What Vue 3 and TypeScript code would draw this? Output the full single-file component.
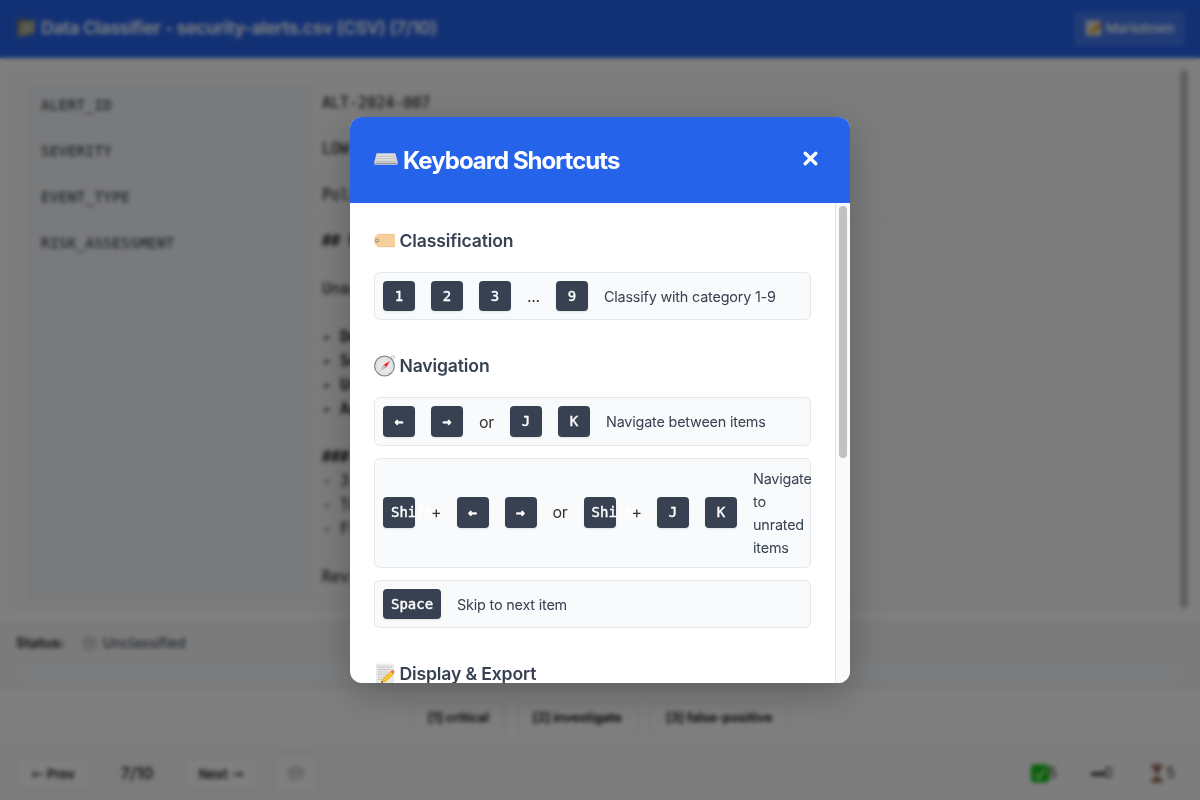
<script setup lang="ts">
interface Field { name: string; lines: { text: string; bold?: boolean }[] }
interface Part { kind: 'key' | 'sep' | 'arrow'; text: string }
interface Shortcut { parts: Part[]; label: string; tall?: boolean; multi?: boolean }

const key = (text: string): Part => ({ kind: 'key', text })
const arrow = (text: string): Part => ({ kind: 'arrow', text })
const sep = (text: string): Part => ({ kind: 'sep', text })

const fields: Field[] = [
  { name: 'ALERT_ID', lines: [{ text: 'ALT-2024-007' }] },
  { name: 'SEVERITY', lines: [{ text: 'LOW' }] },
  { name: 'EVENT_TYPE', lines: [{ text: 'Policy' }] },
  {
    name: 'RISK_ASSESSMENT',
    lines: [
      { text: '## Risk', bold: true }, { text: '' }, { text: 'Unauthorized' }, { text: '' },
      { text: '- De', bold: true }, { text: '- So', bold: true }, { text: '- Us', bold: true }, { text: '- Ac', bold: true },
      { text: '' }, { text: '### ', bold: true }, { text: '- 3' }, { text: '- Te' }, { text: '- Fi' }, { text: '' }, { text: 'Review' },
    ],
  },
]

const categories = ['[1] critical', '[2] investigate', '[3] false-positive']

const classification: Shortcut[] = [
  { parts: [key('1'), key('2'), key('3'), sep('...'), key('9')], label: 'Classify with category 1-9' },
]
const navigation: Shortcut[] = [
  { parts: [arrow('←'), arrow('→'), sep('or'), key('J'), key('K')], label: 'Navigate between items', tall: true },
  { parts: [key('Shift'), sep('+'), arrow('←'), arrow('→'), sep('or'), key('Shift'), sep('+'), key('J'), key('K')], label: 'Navigate to unrated items', tall: true, multi: true },
  { parts: [key('Space')], label: 'Skip to next item' },
]
const sections = [
  { icon: 'tag', title: 'Classification', items: classification },
  { icon: 'compass', title: 'Navigation', items: navigation },
  { icon: 'memo', title: 'Display & Export', items: [] as Shortcut[] },
]
</script>

<template>
  <div class="app">
    <div class="page">
      <header class="topbar">
        <svg class="folder" viewBox="0 0 20 20"><path d="M1 1h6l1 1h10l1 1v13L2 19H1z" fill="#7d7352" /><path d="M4 4l15-1-1 12L3 18z" fill="#b5b4a6" /></svg>
        <h1>Data Classifier - security-alerts.csv (CSV) (7/10)</h1>
        <button class="markdown">
          <svg viewBox="0 0 20 20"><path d="M1 1h18v18H1z" fill="#e4e2dc" /><path d="M5 17l1-4 9-8 4 3-9 8z" fill="#d9a520" /><path d="M15 5l2-2 3 3-1 2z" fill="#d76b72" /></svg>
          <span>Markdown</span>
        </button>
      </header>
      <main class="viewer">
        <div class="table">
          <div v-for="f in fields" :key="f.name" class="row">
            <div class="name">{{ f.name }}</div>
            <div class="value"><div v-for="(l, i) in f.lines" :key="i" class="line" :class="{ strong: l.bold }">{{ l.text }}</div></div>
          </div>
        </div>
        <div class="viewer-thumb"></div>
      </main>
      <section class="status">
        <div class="status-row"><b>Status:</b>
          <svg viewBox="0 0 16 16"><circle cx="8" cy="8" r="7.8" fill="#dcdddf" /><path d="M2 5h12" stroke="#c4c4c6" stroke-width="2" /></svg>
          <span>Unclassified</span>
        </div>
        <div class="note"></div>
      </section>
      <section class="cats"><button v-for="c in categories" :key="c">{{ c }}</button></section>
      <footer class="bottom">
        <button class="prev"><i>←</i> Prev</button>
        <span class="count">7/10</span>
        <button class="next">Next <i>→</i></button>
        <button class="talk"><svg viewBox="0 0 20 18"><path d="M10 1c5 0 9 3 9 7s-4 7-9 7l-5 2 0-3C2 13 1 11 1 8c0-4 4-7 9-7z" fill="#ececec" stroke="#999" /><path d="M5 8h10" stroke="#777" stroke-width="1.8" stroke-dasharray="2 2" /></svg></button>
        <div class="stats">
          <div class="stat done"><svg viewBox="0 0 18 18"><rect width="18" height="18" rx="3" fill="#0bc30b" /><path d="M4 9l4 5 6-10" fill="none" stroke="#fff" stroke-width="1.6" /></svg><span>5</span></div>
          <div class="stat skip"><svg viewBox="0 0 14 8"><path d="M0 4h14" stroke="#444" stroke-width="4" /></svg><span>0</span></div>
          <div class="stat wait"><svg viewBox="0 0 18 20"><path d="M3 2h12M3 18h12" stroke="#87513a" stroke-width="3" /><path d="M4 3h10c0 4-3 5-4 7 1 2 4 3 4 7H4c0-4 3-5 4-7-1-2-4-3-4-7z" fill="#cdbdb0" /><path d="M5 4h8l-4 6z" fill="#71402c" /><path d="M5 17l4-3 4 3z" fill="#71402c" /></svg><span>5</span></div>
        </div>
      </footer>
    </div>

    <div class="overlay">
      <div class="modal">
        <div class="modal-head">
          <svg class="keyboard" viewBox="0 0 24 12">
            <path d="M2.6 .3h18.8L24 10.3q0 1.4-1.2 1.4H1.2Q0 11.7 0 10.3z" fill="#d6d6d8" />
            <path d="M.3 10.4h23.4" stroke="#9c9ca0" stroke-width="1.2" />
            <path d="M3.5 2.2h17M3 4.5h18M2.5 6.8h19" stroke="#ececec" stroke-width="1.3" stroke-dasharray="1.3 .5" />
            <path d="M3.2 3.3h17.6M2.7 5.6h18.6M2 8.2h20" stroke="#a2a2a7" stroke-width=".5" />
          </svg>
          <h2>Keyboard Shortcuts</h2>
          <button class="close" aria-label="Close"><svg viewBox="0 0 16 16"><path d="M3 3l10 10M13 3L3 13" stroke="#fff" stroke-width="3.2" stroke-linecap="round" /></svg></button>
        </div>
        <div class="modal-main">
          <div class="modal-body">
            <section v-for="s in sections" :key="s.title" class="group">
              <h3>
                <svg v-if="s.icon === 'tag'" viewBox="0 0 22 22"><path d="M4 3.9h16q1 0 1 1v11.2q0 1-1 1H4L.5 13.9V7.1z" fill="#f7cf9c" /><path d="M4 4.3h16.3M4 16.7h16.3" stroke="#edbd83" stroke-width=".7" /><circle cx="3" cy="10.6" r="1.7" fill="#c8a47b" stroke="#9d8268" stroke-width=".7" /><circle cx="3" cy="10.6" r=".7" fill="#fff" /></svg>
                <svg v-else-if="s.icon === 'compass'" viewBox="0 0 22 22"><circle cx="19" cy="2.3" r="1.6" fill="none" stroke="#a8b4bb" stroke-width=".8" /><circle cx="10.5" cy="11" r="9.8" fill="#f1f1f1" stroke="#858b92" stroke-width="1.3" /><circle cx="10.5" cy="11" r="8.2" fill="#e8e8e8" stroke="#d4d6d8" stroke-width=".8" /><path d="M16 5.7l-3.6 6.6-2.8-2.4z" fill="#ee2426" /><path d="M5.4 16.5l4.2-6.6 2.8 2.4z" fill="#a4a4a4" /><path d="M6.5 15.6l4.5-4.6" stroke="#fff" stroke-width=".8" /></svg>
                <svg v-else viewBox="0 0 22 22"><path d="M2 .7h18v20.3H2z" fill="#e9e9e7" /><path d="M4 4h14M4 6.5h13M4 9h10M4 11.5h9M4 14h6M4 16.5h4" stroke="#aaa" stroke-width=".7" stroke-dasharray="2 .6" /><path d="M7 20l1.6-4.5 8.2-7.4 3 3.2-8.1 7.8z" fill="#f3b72b" /><path d="M9.8 17.5l8.3-7.7" stroke="#ffdc68" /><path d="M16.3 8.5l1.5-1.4q1-.9 2.2.3t.3 2.3l-1.2 1.3z" fill="#e77878" /><path d="M7 20l.7-2.3 1.6 1.4z" fill="#444" /></svg>
                <span>{{ s.title }}</span>
              </h3>
              <div v-for="(item, i) in s.items" :key="i" class="shortcut" :class="{ tall: item.tall, multi: item.multi }">
                <template v-for="(p, j) in item.parts" :key="j">
                  <span v-if="p.kind === 'sep'" class="sep" :class="{ plus: p.text === '+' }">{{ p.text }}</span>
                  <kbd v-else :class="{ arrow: p.kind === 'arrow', wide: p.text === 'Space' }">{{ p.text }}</kbd>
                </template>
                <span class="desc">{{ item.label }}</span>
              </div>
            </section>
          </div>
          <div class="track"><div class="thumb"></div></div>
        </div>
      </div>
    </div>
  </div>
</template>

<style>
body { margin: 0; overflow: hidden; }
</style>

<style scoped>
* { box-sizing: border-box; }
.app { position: relative; width: 1200px; height: 800px; overflow: hidden; font-family: Inter, "Liberation Sans", sans-serif; color: #333; line-height: 1.6; background: #fff; }
h1, h2, h3 { margin: 0; font-weight: 600; }
button { font-family: inherit; margin: 0; }
.page { height: 800px; display: flex; flex-direction: column; }
.topbar { height: 58px; flex: none; background: #2563eb; color: #fff; display: flex; align-items: center; padding: 0 16px 2px; }
.folder { width: 20px; height: 20px; margin-right: 5px; }
.topbar h1 { font-size: 17.6px; letter-spacing: -.3px; line-height: 28px; }
.markdown { margin-left: auto; width: 109px; height: 33px; border: 1px solid rgba(255,255,255,.1); background: rgba(255,255,255,.13); border-radius: 4px; color: #fff; display: flex; align-items: center; justify-content: center; gap: 4px; padding: 0; font-size: 13.6px; font-weight: 500; }
.markdown svg { width: 17px; height: 18px; }
.viewer { margin: 8px; height: 546px; flex: none; background: #fafafa; border-radius: 8px; padding: 18px; display: flex; justify-content: space-between; }
.table { width: 1134px; height: 516px; display: flex; flex-direction: column; }
.row { display: flex; border-bottom: 1px solid #eceef0; min-height: 46px; flex: none; }
.row:last-child { flex: 1; }
.name { width: 287px; background: #f3f5f8; color: #4b5563; padding: 8.5px 15px; font: 400 14px/24px "DejaVu Sans Mono", monospace; letter-spacing: .47px; -webkit-text-stroke: .35px #4b5563; }
.value { padding: 7px 9px; font: 15px/24px "DejaVu Sans Mono", monospace; color: #333; -webkit-text-stroke: .2px #333; white-space: pre; }
.line { height: 24px; }
.strong { font-weight: 700; }
.viewer-thumb { width: 8px; height: 538px; margin: -14px -14px 0 0; background: #c1c1c1; border-radius: 4px; }
.status { height: 70px; flex: none; background: #f7f7f7; padding: 10px 16px 0; }
.status-row { display: flex; align-items: center; height: 26px; font-size: 14px; }
.status-row b { font-weight: 700; width: 65px; }
.status-row svg { width: 17px; height: 17px; margin-right: 5px; }
.status-row span { color: #4b5563; font-weight: 500; }
.note { height: 20px; margin-top: 7px; background: #f8fafc; border: 1px solid #eef2f7; border-radius: 5px; }
.cats { height: 55px; flex: none; background: #fff; display: flex; justify-content: center; align-items: center; gap: 12px; }
.cats button { height: 34px; padding: 0 15px; border: 1px solid #dde1e4; border-radius: 4px; background: #fff; font-size: 12.8px; font-weight: 650; letter-spacing: -.05px; color: #222; }
.bottom { height: 55px; flex: none; background: #f8f8f8; display: flex; align-items: center; padding: 2px 16px 0; }
.bottom button { background: #fff; border: 1px solid #dde1e4; border-radius: 4px; height: 31px; width: 74px; padding: 0; font-size: 13px; letter-spacing: -.1px; font-weight: 600; color: #222; }
.bottom i { font: 400 15px/1 "DejaVu Sans", sans-serif; }
.count { width: 94px; text-align: center; font-size: 16px; font-weight: 600; }
.bottom .talk { width: 44px; height: 38px; margin-left: 16px; display: grid; place-items: center; }
.talk svg { width: 18px; height: 17px; }
.stats { margin-left: auto; display: flex; gap: 18px; }
.stat { height: 31px; width: 40px; display: flex; align-items: center; justify-content: center; background: #fbfbfb; border-radius: 4px; font-size: 14px; }
.stat span { margin-left: -1px; }
.stat svg { width: 18px; height: 19px; }
.stat.skip svg { width: 14px; height: 8px; }
.stat.skip { padding-right: 2px; }
.stat.wait { width: 43px; gap: 1px; padding-right: 2px; }
.stat.done { padding-right: 2px; }
.overlay { position: absolute; inset: 0; background: rgba(0,0,0,.5); backdrop-filter: blur(2px); display: flex; align-items: center; justify-content: center; }
.modal { width: 500px; height: 566px; background: #fff; border-radius: 12px; overflow: hidden; display: flex; flex-direction: column; box-shadow: 0 10px 40px rgba(0,0,0,.25); }
.modal-head { height: 86px; flex: none; background: #2563eb; color: #fff; display: flex; align-items: center; padding: 0 24px; }
.keyboard { width: 24px; height: 12px; margin: -2px 5px 0 0; }
.modal-head h2 { font-size: 24px; font-weight: 650; line-height: 38px; letter-spacing: -.98px; padding-top: 2px; }
.close { width: 32px; height: 32px; margin: -4px 0 0 auto; border: 0; background: none; padding: 0; display: grid; place-items: center; }
.close svg { width: 17px; height: 17px; }
.modal-main { height: 480px; display: flex; }
.modal-body { width: 485px; padding: 24px; height: 480px; overflow: hidden; }
.track { width: 15px; background: #fafafa; border-left: 1px solid #e5e5e5; padding: 3px; }
.thumb { width: 8px; height: 252px; border-radius: 4px; background: #c1c1c1; }
.group { margin-bottom: 32px; }
h3 { height: 28px; display: flex; align-items: center; gap: 3.5px; margin-bottom: 17px; font-size: 17.6px; line-height: 28px; letter-spacing: -.15px; color: #374151; }
h3 svg { width: 22px; height: 22px; flex: none; }
.shortcut { display: flex; align-items: center; gap: 16px; padding: 8px; margin-bottom: 12px; border: 1px solid #e5e7eb; border-radius: 6px; background: #f9fafb; }
.shortcut:last-child { margin-bottom: 0; }
kbd { width: 32px; height: 30px; flex: none; padding: 0 8px; border-radius: 4px; background: #374151; color: #fff; font: 400 14px/30px "DejaVu Sans Mono", monospace; -webkit-text-stroke: .4px #fff; text-align: center; white-space: nowrap; box-shadow: 0 1px 2px rgba(0,0,0,.1); }
.tall kbd { height: 31px; }
.multi kbd { margin-top: -1px; }
.multi .sep { margin-top: -2px; }
kbd.arrow { -webkit-text-stroke-width: .9px; }
kbd.wide { width: 58px; }
.sep { font-size: 16px; line-height: 26px; flex: none; color: #333; letter-spacing: -.3px; }
.plus { letter-spacing: -1.1px; }
.desc { font-size: 14.4px; line-height: 23px; letter-spacing: -.19px; color: #374151; width: 0; flex: 1; }
</style>
